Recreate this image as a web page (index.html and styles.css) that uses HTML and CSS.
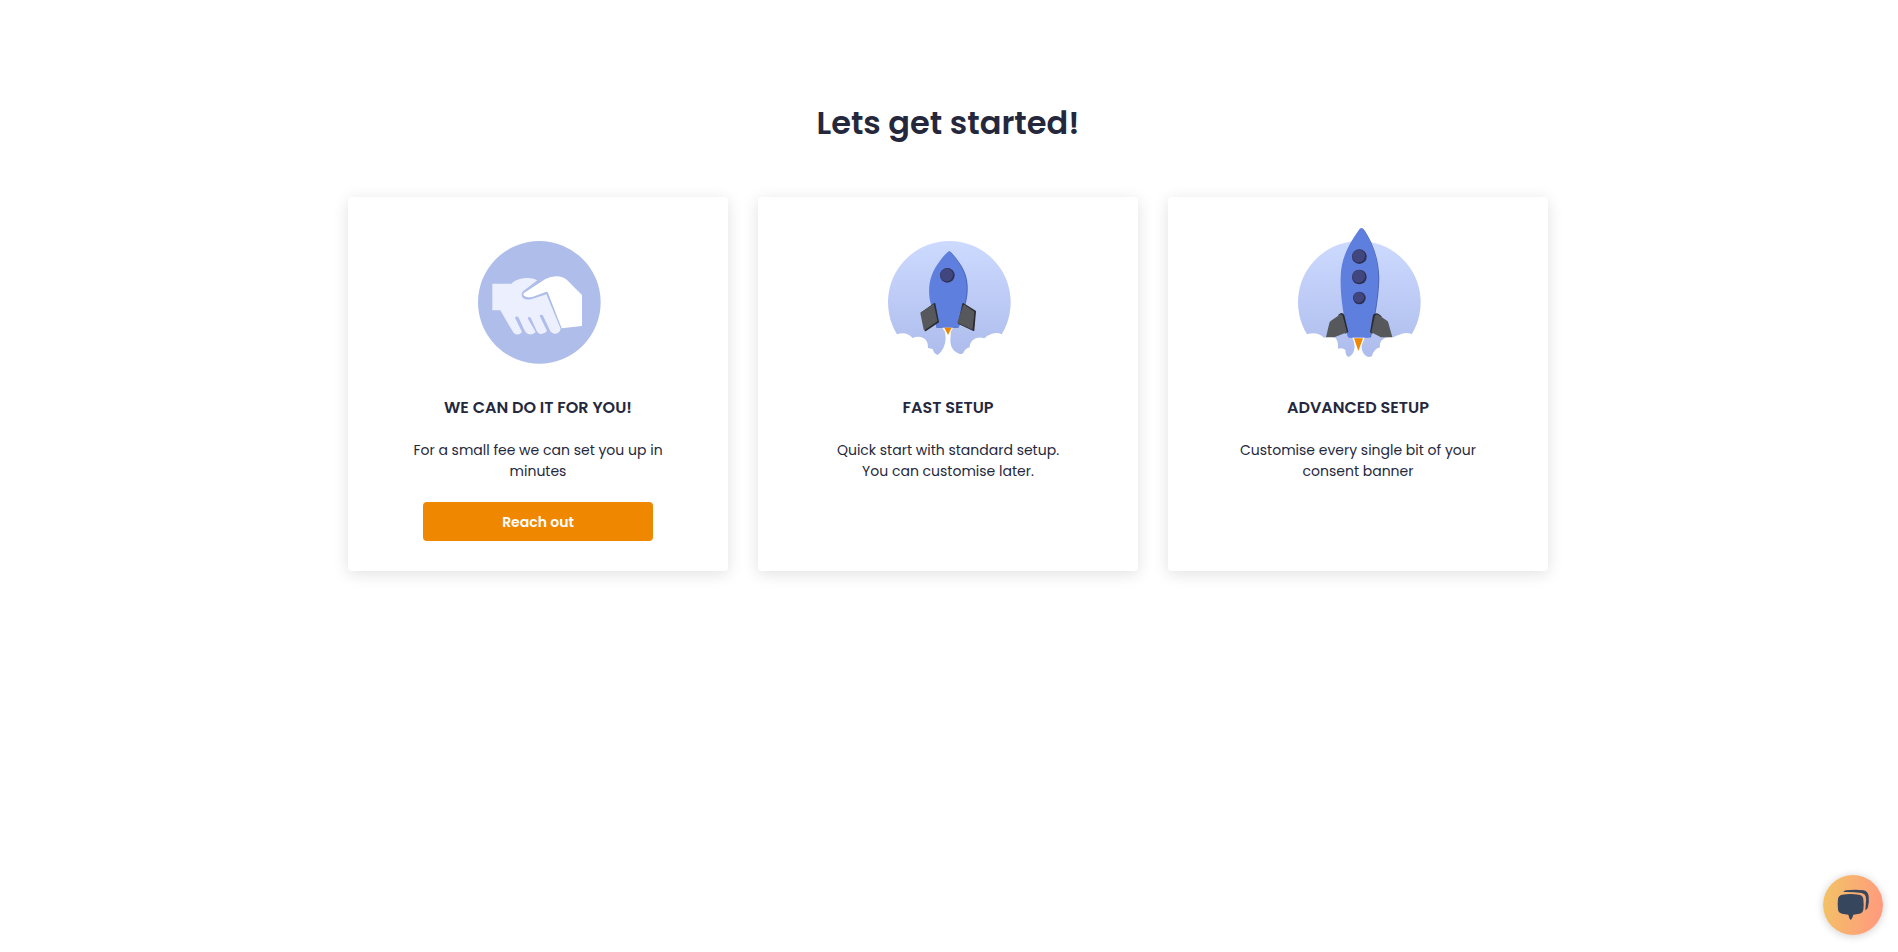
FILE: index.html
```
<!DOCTYPE html>
<html lang="en">
<head>
  <meta charset="UTF-8">
  <meta name="viewport" content="width=device-width, initial-scale=1.0">
  <title>Get started</title>
  <link rel="stylesheet" href="styles.css">
</head>
<body>
  <main class="setup">
    <h1 class="setup-title">Lets get started!</h1>

    <div class="cards">
      <div class="card">
        <svg class="card-image" viewBox="-6 -30 450 480" aria-hidden="true">
          <circle cx="223" cy="232" r="184" fill="#aebdea"/>
          <path fill="#ecf0fe" d="M82 176H140C152 162 184 155 208 162L217 166L174 199Q166 210 174 219Q184 227 203 221L244 208L287 311Q284 325 271 326Q262 327 256 319L234 272Q229 266 224 272L246 318Q238 328 226 327Q218 325 214 316L198 280Q192 272 188 280L212 321Q204 331 190 327Q182 324 178 315L161 278Q155 271 150 278L171 321Q163 331 152 328Q146 326 141 316L106 256H82Z"/>
          <path fill="#fff" d="M178 203L240 163Q268 147 296 158Q306 163 315 174L351 210V303L290 310L249 204Q248 199 242 201L204 215Q188 219 178 213Q172 208 178 203Z"/>
        </svg>
        <h3 class="card-title">WE CAN DO IT FOR YOU!</h3>
        <p class="card-text">For a small fee we can set you up in minutes</p>
        <button type="button" class="card-btn">Reach out</button>
      </div>

      <a class="card" href="#fast">
        <svg class="card-image" viewBox="-6 -30 450 480" aria-hidden="true">
          <defs>
            <linearGradient id="sky" x1="0" y1="0" x2="0" y2="1">
              <stop offset="0" stop-color="#cddaff"/>
              <stop offset="1" stop-color="#adbcec"/>
            </linearGradient>
          </defs>
          <path fill="url(#sky)" d="M66 328A184 184 0 1 1 380 328Q366 321 349 327Q336 331 328 340Q307 332 291 347Q283 358 284 367Q270 370 265 384Q260 389 252 386Q244 384 236 376Q226 364 226 346L228 308H209L212 340Q211 372 188 390Q176 385 173 372L159 369Q160 348 145 339Q130 332 113 339Q94 318 66 328Z"/>
          <path fill="#4a66b8" d="M223 78Q232 83 254 114C278 149 283 185 274 228Q267 255 250 308H184L216 100Z"/>
          <path fill="#5f7fde" d="M221 79Q230 83 251 113C275 148 280 185 271 228Q267 252 252 307H184L164 222C158 180 167 143 195 107Q211 86 221 79Z"/>
          <circle cx="217" cy="151" r="22" fill="#2d3154"/>
          <circle cx="215" cy="150" r="19" fill="#42467f"/>
          <path fill="#2b2c31" stroke="#2b2c31" stroke-width="4" stroke-linejoin="round" d="M179 236L141 263L151 317L190 291ZM264 236L301 259L296 316L251 295Z"/>
          <path fill="#56585b" stroke="#56585b" stroke-width="4" stroke-linejoin="round" d="M175 240L138 264L148 313L185 288ZM267 241L296 261L291 311L249 292Z"/>
          <path fill="#fff" d="M202 308H234L219 334Z"/>
          <path fill="#f08700" d="M208 308H230L219 330Z"/>
        </svg>
        <h3 class="card-title">FAST SETUP</h3>
        <p class="card-text">Quick start with standard setup.<br>You can customise later.</p>
      </a>

      <a class="card" href="#advanced">
        <svg class="card-image" viewBox="-6 0 450 480" aria-hidden="true">
          <path fill="url(#sky)" d="M66 358A184 184 0 1 1 380 358Q366 351 349 357Q336 361 325 367Q304 362 290 376Q283 385 285 397Q268 400 261 423Q250 430 239 419Q228 408 230 388L234 368H205L209 394Q208 419 191 426Q182 424 181 405Q175 398 159 401Q160 378 151 368Q136 362 117 368Q95 348 66 358Z"/>
          <path fill="#4a66b8" d="M232 39L240 48C266 89 281 132 283 188C282 248 270 306 258 367H190Z"/>
          <path fill="#5f7fde" d="M222 44Q229 34 236 45C265 88 280 133 280 188C280 248 266 306 257 362Q256 368 250 368H194Q188 368 187 361C176 299 165 243 167 185C168 133 188 92 222 44Z"/>
          <g fill="#2d3154">
            <circle cx="223" cy="125" r="22"/>
            <circle cx="223" cy="186" r="22"/>
            <circle cx="223" cy="249" r="19"/>
          </g>
          <g fill="#42467f">
            <circle cx="221" cy="123" r="19"/>
            <circle cx="221" cy="184" r="19"/>
            <circle cx="221" cy="247" r="16"/>
          </g>
          <path fill="#2b2c31" d="M160 299L168 294Q176 294 178 301L190 351L180 356ZM264 300Q270 292 280 296L290 304L262 356L255 352Z"/>
          <path fill="#56585b" d="M133 324Q134 320 138 317L164 299Q171 296 173 303L186 352L148 367H123ZM270 302Q275 296 281 300L306 317Q309 319 310 323L322 367H288L259 352Z"/>
          <path fill="#fff" d="M202 368H239L221 413Z"/>
          <path fill="#f08700" d="M207 370H234L220 408Z"/>
        </svg>
        <h3 class="card-title">ADVANCED SETUP</h3>
        <p class="card-text">Customise every single bit of your consent banner</p>
      </a>
    </div>
  </main>

  <button type="button" class="chat-btn" aria-label="Open chat">
    <svg class="chat-icon" viewBox="0 0 180 180" aria-hidden="true">
      <path fill="#36465d" d="M61 51Q63 46 70 46Q96 42 122 46Q135 49 137 64Q139 82 135 96Q133 104 127 106L128 90Q131 76 128 64Q126 56 116 54Q88 50 61 51Z"/>
      <path fill="#36465d" d="M58 59Q83 55 108 59Q120 61 121 72Q123 89 121 105Q119 114 109 116L91 119Q87 134 82 134Q79 132 76 119L57 116Q46 114 45 103Q43 87 45 72Q46 61 58 59Z"/>
    </svg>
  </button>
</body>
</html>
```
FILE: styles.css
```
* {
  box-sizing: border-box;
}

body {
  margin: 0;
  padding-right: 2px;
  min-height: 100vh;
  background: #fff;
  font-family: Poppins, Inter, "Open Sans", sans-serif;
  font-size: 14px;
  color: #25283d;
}

.setup {
  max-width: 1200px;
  margin: 0 auto;
  padding-top: 99px;
}

.setup-title {
  margin: 0 0 50px;
  font-size: 32px;
  line-height: 48px;
  font-weight: 600;
  text-align: center;
}

.cards {
  display: grid;
  grid-template-columns: repeat(3, 1fr);
  gap: 30px;
}

.card {
  display: flex;
  flex-direction: column;
  align-items: center;
  padding: 18px 50px 30px;
  border-radius: 4px;
  background: #fff;
  box-shadow: 0 3px 16px rgba(0, 0, 0, 0.12);
  color: inherit;
  text-align: center;
  text-decoration: none;
}

.card-image {
  width: 150px;
  height: 160px;
}

.card-title {
  margin: 21px 0 20px;
  font-size: 16px;
  line-height: 24px;
  font-weight: 600;
}

.card-text {
  margin: 0 0 20px;
  font-size: 14px;
  line-height: 21px;
}

.card-btn {
  width: 230px;
  height: 39px;
  padding: 2px 0 0;
  border: none;
  border-radius: 4px;
  background: #f08700;
  color: #fff;
  font-family: inherit;
  font-size: 14px;
  font-weight: 600;
  cursor: pointer;
}

.card-btn:hover {
  background: #d97a00;
}

/* floating chat launcher */
.chat-btn {
  position: fixed;
  right: 15px;
  bottom: 17px;
  width: 60px;
  height: 60px;
  padding: 0;
  border: none;
  border-radius: 50%;
  background: linear-gradient(100deg, #f3c067 10%, #ff9b7d 90%);
  box-shadow: 0 1px 8px rgba(0, 0, 0, 0.2);
  cursor: pointer;
}

.chat-icon {
  display: block;
  width: 60px;
  height: 60px;
}
```
